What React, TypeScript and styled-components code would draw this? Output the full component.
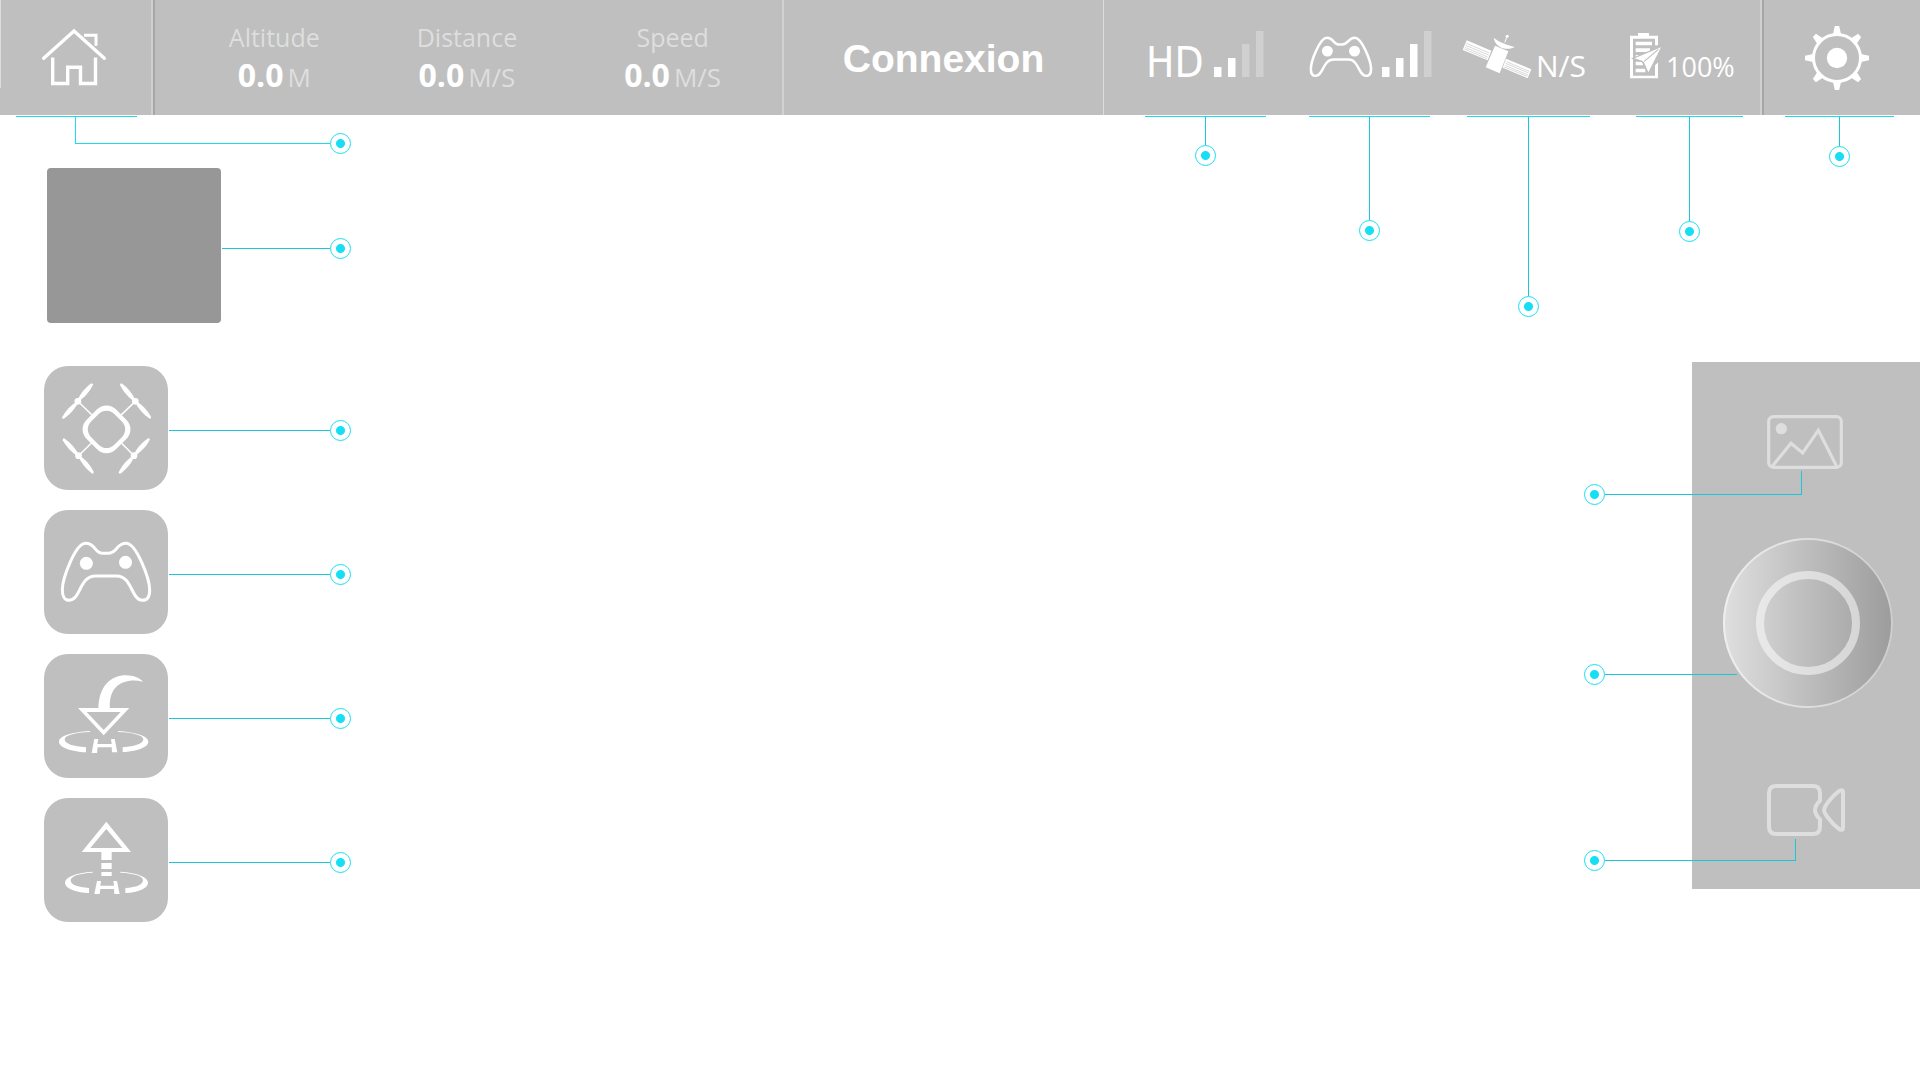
import React from "react";
import styled, { createGlobalStyle, css } from "styled-components";

const color = {
  panel: "#bfbfbf",
  preview: "#979797",
  soft: "#dedede",
  line: "#1cc6da",
  rule: "#1cdcec",
  marker: "#17dff3",
};

const GlobalStyle = createGlobalStyle`
  *, *::before, *::after { box-sizing: border-box; }
  body {
    margin: 0;
    background: #ffffff;
    font-family: "Open Sans", "Noto Sans", sans-serif;
  }
  button {
    margin: 0;
    padding: 0;
    border: 0;
    background: none;
    color: inherit;
    font: inherit;
    cursor: pointer;
  }
  svg { display: block; flex: none; overflow: visible; }
`;

const Page = styled.div`
  min-height: 100vh;
`;

/* ---------- top bar ---------- */

const TopBar = styled.header`
  position: relative;
  display: grid;
  grid-template-columns: 155px 629fr 320fr 660fr 156px;
  height: 115px;
  background: ${color.panel};
  color: #ffffff;
`;

const grooved = css`
  border-right: 2px solid #a6a6a6;
  box-shadow: inset -2px 0 #d0d0d0;
`;

const HomeCell = styled.div`
  display: flex;
  padding-left: 16px;
  background: linear-gradient(#dcdcdc, #dcdcdc) 0 0 / 1px 88px no-repeat;
  ${grooved}
`;

const Telemetry = styled.section`
  display: grid;
  grid-template-columns: 192fr 192fr 218fr;
  padding: 19px 0 0 23px;
  border-right: 2px solid #d2d2d2;
`;

const Metric = styled.div`
  display: flex;
  flex-direction: column;
  align-items: center;
  line-height: 37px;
  white-space: nowrap;
`;

const MetricLabel = styled.span`
  font-size: 25px;
  color: ${color.soft};
`;

const MetricReading = styled.span`
  display: flex;
  align-items: baseline;
  gap: 4px;
`;

const MetricValue = styled.strong`
  font-size: 32px;
  font-weight: 700;
`;

const MetricUnit = styled.span`
  font-size: 26px;
  color: ${color.soft};
`;

const ConnectButton = styled.button`
  padding-top: 3px;
  border-right: 1px solid #dcdcdc;
  font-family: "Liberation Sans", Arial, sans-serif;
  font-size: 39px;
  font-weight: 700;
`;

const StatusArea = styled.section`
  display: grid;
  grid-template-columns: 164fr 154fr 167fr 132fr;
  padding-left: 41px;
  ${grooved}
`;

const StatusItem = styled.div<{ $width: number; $gap: number }>`
  position: relative;
  display: flex;
  align-items: baseline;
  gap: ${(p) => p.$gap}px;
  width: ${(p) => p.$width}px;
  line-height: 40px;
  white-space: nowrap;

  svg { margin-top: 31px; }
`;

const HdLabel = styled.span`
  width: 59px;
  padding-left: 1px;
  font-family: "DejaVu Sans Condensed", "DejaVu Sans", sans-serif;
  font-size: 42px;
`;

const StatusText = styled.span<{ $size: number }>`
  font-size: ${(p) => p.$size}px;
`;

const BarButton = styled.button<{ $width: number }>`
  position: relative;
  display: flex;
  align-items: center;
  justify-content: center;
  width: ${(p) => p.$width}px;
`;

const SettingsCell = styled.div`
  display: flex;
  padding-left: 21px;
`;

/* ---------- callouts ---------- */

const Ring = styled.i`
  display: block;
  flex: none;
  width: 21px;
  height: 21px;
  border: 1px solid ${color.marker};
  border-radius: 50%;
  background: radial-gradient(circle, ${color.marker} 4px, transparent 5px);
`;

const Drop = styled.span<{ $inset: number }>`
  position: absolute;
  top: calc(100% + 1px);
  left: ${(p) => p.$inset}px;
  right: 0;
  display: flex;
  flex-direction: column;
  align-items: center;
  border-top: 1px solid ${color.rule};
`;

const Stem = styled.i<{ $length: number }>`
  width: 1px;
  height: ${(p) => p.$length}px;
  background: ${color.line};
`;

const HomeElbow = styled.span`
  position: absolute;
  top: 0;
  left: 59px;
  width: 255px;
  height: 27px;
  border-left: 1px solid ${color.rule};
  border-bottom: 1px solid ${color.rule};

  ${Ring} {
    position: absolute;
    left: 100%;
    bottom: -11px;
  }
`;

const Reach = styled.span<{ $top: number; $right: number; $width: number; $height: number }>`
  position: absolute;
  top: ${(p) => p.$top}px;
  right: ${(p) => p.$right}px;
  width: ${(p) => p.$width}px;
  height: ${(p) => p.$height}px;
  border-right: 1px solid ${color.line};
  border-bottom: 1px solid ${color.line};

  ${Ring} {
    position: absolute;
    right: 100%;
    bottom: -11px;
  }
`;

const Leader = styled.span`
  flex: 1;
  display: flex;
  align-items: center;
  margin-left: 1px;
  padding-top: 5px;

  &::before {
    content: "";
    flex: 1;
    height: 1px;
    background: ${color.line};
  }
`;

/* ---------- body ---------- */

const Stage = styled.main`
  display: flex;
  justify-content: space-between;
  align-items: flex-start;
`;

const ToolRail = styled.nav`
  display: flex;
  flex-direction: column;
  gap: 20px;
  width: 351px;
  padding: 53px 0 0 44px;
`;

const ToolRow = styled.div`
  display: flex;
  align-items: center;
`;

const PreviewRow = styled(ToolRow)`
  margin: 0 0 23px 3px;
`;

const Preview = styled.div`
  width: 174px;
  height: 155px;
  border-radius: 4px;
  background: ${color.preview};
`;

const ToolButton = styled.button`
  width: 124px;
  height: 124px;
  border-radius: 24px;
  background: ${color.panel};
`;

const CameraPanel = styled.aside`
  display: flex;
  flex-direction: column;
  align-items: center;
  gap: 66px;
  width: 228px;
  margin-top: 247px;
  padding: 46px 0 51px 4px;
  background: ${color.panel};
`;

const CameraButton = styled.button`
  position: relative;
`;

const Shutter = styled.button`
  position: relative;
  display: grid;
  place-items: center;
  width: 170px;
  height: 170px;
  border-radius: 50%;
  background: linear-gradient(90deg, #dfdfdf, #bdbdbd 50%, #9c9c9c);

  &::before {
    content: "";
    position: absolute;
    inset: 0;
    border: 2px solid rgba(255, 255, 255, 0.5);
    border-radius: 50%;
  }

  &::after {
    content: "";
    width: 104px;
    height: 104px;
    border: 8px solid rgba(255, 255, 255, 0.52);
    border-radius: 50%;
  }
`;

/* ---------- drawings ---------- */

const HomeIcon = () => (
  <svg width="69" height="59" viewBox="42 28 69 59" fill="none" stroke="#fff" strokeWidth="3.4">
    <path d="M43.7 58.3 74 31l30.3 27.3" strokeLinecap="round" />
    <path d="M52.7 57.5v26h15V67.2h12.8v16.3h15v-26" />
    <path d="M84 35.2h12v10.5" strokeWidth="3" />
  </svg>
);

const SignalBars = ({ level }: { level: number }) => (
  <svg width="50" height="46" viewBox="0 0 50 46">
    {[10, 19, 33, 46].map((h, i) => (
      <rect key={h} x={i * 14} y={46 - h} width="7.5" height={h} fill={i < level ? "#fff" : "#d0d0d0"} />
    ))}
  </svg>
);

const PAD_OUTLINE =
  "M167 580C136 580 97 686 97 720C97 740 105 751 117 751C152 751 148 678 196 678H260C307 678 303 751 338 751C351 751 359 740 359 720C359 686 319 580 288 580C258 580 262 610 234 610H218C192 610 198 580 167 580Z";

const PadIcon = () => (
  <svg width="124" height="124" viewBox="42 480 372 372">
    <path d={PAD_OUTLINE} fill="none" stroke="#fff" strokeWidth="9" />
    <circle cx="169" cy="640" r="19.5" fill="#fff" />
    <circle cx="286.5" cy="637" r="19.5" fill="#fff" />
  </svg>
);

const SmallPadIcon = () => (
  <svg width="63" height="46" viewBox="89 550 274 206" preserveAspectRatio="none">
    <path d={PAD_OUTLINE} fill="none" stroke="#fff" strokeWidth="11" />
    <circle cx="169" cy="640" r="24" fill="#fff" />
    <circle cx="287" cy="640" r="24" fill="#fff" />
  </svg>
);

const SatelliteIcon = () => (
  <svg width="68" height="46" viewBox="69 93 204 138" fill="#fff">
    <path d="M80 121 154 152 143 181 68 150ZM165 137 205 154 179 220 137 202ZM198 176 274 208 263 235 188 203Z" />
    <path d="M161 113C176 126 200 134 224 141C206 153 166 146 161 113Z" />
    <path d="M194 127 201 110" stroke="#fff" strokeWidth="3" />
    <circle cx="201.500" cy="108.500" r="4.500" />
    <path
      d="M79 130 148 159M77 136 146 165M75 142 143 171M73 147 141 176M199 185 268 214M197 190 266 219M195 196 264 225M193 201 262 229"
      stroke={color.panel}
      strokeWidth="1.800"
    />
  </svg>
);

const BatteryIcon = () => (
  <svg width="31" height="46" viewBox="570 93 93 138" fill="#fff">
    <path d="M594 99H627V107H654V235H570V107H594ZM579 116V227H645V116Z" fillRule="evenodd" />
    <path d="M587 125H636V136H587ZM587 145H630V156H587ZM587 165H606V175H587ZM587 185H610V196H587ZM587 206H616V217H587Z" />
    <path d="M641 136H660V182L645 196Z" fill={color.panel} />
    <path d="M663 142 584 175 609 184 625 217Z" stroke={color.panel} strokeWidth="8" />
    <path d="M663 142 584 175 608 183 613 189 625 217Z" />
    <path d="M655 148 612 185" stroke={color.panel} strokeWidth="3.500" />
  </svg>
);

const GearIcon = () => (
  <svg width="69" height="64" viewBox="1095 78 207 192">
    <circle cx="1191" cy="174" r="70.500" fill="none" stroke="#fff" strokeWidth="9" />
    <circle cx="1191" cy="174" r="30.500" fill="#fff" />
    {[0, 45, 90, 135, 180, 225, 270, 315].map((a) => (
      <path key={a} d="M1179 102 1184.500 78H1197.500L1203 102Z" fill="#fff" transform={`rotate(${a} 1191 174)`} />
    ))}
  </svg>
);

const rotors = [
  { x: 143.5, y: 154, arm: [190, 199], blades: [-50, 132] },
  { x: 316, y: 154, arm: [269, 199], blades: [-130, 48] },
  { x: 145.5, y: 317, arm: [190, 274], blades: [-132, 50] },
  { x: 312, y: 317, arm: [269, 274], blades: [-48, 130] },
];

const DroneIcon = () => (
  <svg width="124" height="124" viewBox="42 48 372 372" fill="#fff">
    {rotors.map((r) => (
      <g key={`${r.x}-${r.y}`}>
        <path d={`M${r.x} ${r.y}L${r.arm[0]} ${r.arm[1]}`} stroke="#fff" strokeWidth="4.500" />
        <circle cx={r.x} cy={r.y} r="10" />
        {r.blades.map((a) => (
          <path
            key={a}
            d="M0-2C20-9 44-9 66-4Q71-1 68 3C46 9 22 8 0 2Z"
            transform={`translate(${r.x} ${r.y}) rotate(${a})`}
          />
        ))}
      </g>
    ))}
    <g transform="translate(229.500 238) rotate(45)">
      <rect x="-62.500" y="-62.500" width="125" height="125" rx="40" />
      <rect x="-49" y="-49" width="98" height="98" rx="32" fill={color.panel} />
    </g>
  </svg>
);

const ReturnIcon = () => (
  <svg width="124" height="124" viewBox="42 48 372 372" fill="#fff">
    <path d="M205 212C207 142 244 112 288 112C312 112 330 121 339 131C286 118 234 140 240 212Z" />
    <path d="M144 210H298L221 292ZM170 222 221 276 272 222Z" fillRule="evenodd" />
    <path d="M193 303H205L202 318H245L243 303H254L262 343H246L245 328H203L201 345H185Z" />
    <path d="M180 279C120 283 87 295 87 311C87 327 120 340 168 343V328C130 325 104 318 104 304C104 292 135 284 180 282Z" />
    <path d="M264 279C320 283 355 295 355 311C355 328 320 340 278 342V328C315 325 340 317 340 304C340 292 310 284 264 282Z" />
  </svg>
);

const TakeOffIcon = () => (
  <svg width="124" height="124" viewBox="42 474 372 372" fill="#fff">
    <path d="M229 545 303 636H155ZM229 567 181 624H277Z" fillRule="evenodd" />
    <path d="M214 634H245V660H214ZM214 669H245V687H214ZM214 696H245V708H214Z" />
    <path d="M201 723H213L211 737H252L250 723H261L269 762H253L252 747H211L209 762H193Z" />
    <path d="M188 695C135 698 105 712 105 728C105 745 135 757 177 759V744C142 742 122 734 122 721C122 709 145 700 188 698Z" />
    <path d="M271 695C325 698 354 712 354 728C354 745 325 757 286 759V744C320 742 339 734 339 720C339 709 315 700 271 698Z" />
  </svg>
);

const PhotoIcon = () => (
  <svg width="84" height="64" viewBox="588 174 252 192" fill="none" stroke={color.soft} strokeWidth="9.500">
    <rect x="596" y="200" width="218" height="152" rx="14" />
    <path d="M605 351 663 280 698 309 745 241 801 351" />
    <circle cx="634" cy="236" r="17" fill={color.soft} stroke="none" />
  </svg>
);

const VideoIcon = () => (
  <svg width="84" height="64" viewBox="588 522 252 192" fill="none" stroke={color.soft} strokeWidth="12">
    <path d="M750 602V580Q750 558 728 558H619Q597 558 597 580V680Q597 702 619 702H728Q750 702 750 680V658C741 649 735 641 735 630C735 619 741 611 750 602Z" />
    <path d="M819 577V683C819 692 811 690 806 686C784 670 762 640 762 630C762 620 784 590 806 574C811 570 819 568 819 577Z" />
  </svg>
);

/* ---------- assembly ---------- */

const metrics = [
  { label: "Altitude", value: "0.0", unit: "M" },
  { label: "Distance", value: "0.0", unit: "M/S" },
  { label: "Speed", value: "0.0", unit: "M/S" },
];

const tools = [
  { name: "Drone", Icon: DroneIcon },
  { name: "Controller", Icon: PadIcon },
  { name: "Return and land", Icon: ReturnIcon },
  { name: "Take off", Icon: TakeOffIcon },
];

const DropCallout = ({ length, inset = 0 }: { length: number; inset?: number }) => (
  <Drop $inset={inset}>
    <Stem $length={length} />
    <Ring />
  </Drop>
);

export default function App() {
  return (
    <Page>
      <GlobalStyle />
      <TopBar>
        <HomeCell>
          <BarButton $width={121} aria-label="Home">
            <HomeIcon />
            <Drop $inset={0}>
              <HomeElbow>
                <Ring />
              </HomeElbow>
            </Drop>
          </BarButton>
        </HomeCell>

        <Telemetry>
          {metrics.map((m) => (
            <Metric key={m.label}>
              <MetricLabel>{m.label}</MetricLabel>
              <MetricReading>
                <MetricValue>{m.value}</MetricValue>
                <MetricUnit>{m.unit}</MetricUnit>
              </MetricReading>
            </Metric>
          ))}
        </Telemetry>

        <ConnectButton>Connexion</ConnectButton>

        <StatusArea>
          <StatusItem $width={121} $gap={10}>
            <HdLabel>HD</HdLabel>
            <SignalBars level={2} />
            <DropCallout length={28} />
          </StatusItem>
          <StatusItem $width={121} $gap={10}>
            <SmallPadIcon />
            <SignalBars level={3} />
            <DropCallout length={103} />
          </StatusItem>
          <StatusItem $width={127} $gap={5}>
            <SatelliteIcon />
            <StatusText $size={30}>N/S</StatusText>
            <DropCallout length={179} inset={4} />
          </StatusItem>
          <StatusItem $width={113} $gap={5}>
            <BatteryIcon />
            <StatusText $size={27}>100%</StatusText>
            <DropCallout length={104} inset={6} />
          </StatusItem>
        </StatusArea>

        <SettingsCell>
          <BarButton $width={109} aria-label="Settings">
            <GearIcon />
            <DropCallout length={29} />
          </BarButton>
        </SettingsCell>
      </TopBar>

      <Stage>
        <ToolRail>
          <PreviewRow>
            <Preview />
            <Leader>
              <Ring />
            </Leader>
          </PreviewRow>
          {tools.map(({ name, Icon }) => (
            <ToolRow key={name}>
              <ToolButton aria-label={name}>
                <Icon />
              </ToolButton>
              <Leader>
                <Ring />
              </Leader>
            </ToolRow>
          ))}
        </ToolRail>

        <CameraPanel>
          <CameraButton aria-label="Photo">
            <PhotoIcon />
            <Reach $top={63} $right={48} $width={197} $height={24}>
              <Ring />
            </Reach>
          </CameraButton>
          <Shutter aria-label="Shutter">
            <Reach $top={136} $right={156} $width={132} $height={1}>
              <Ring />
            </Reach>
          </Shutter>
          <CameraButton aria-label="Video">
            <VideoIcon />
            <Reach $top={65} $right={54} $width={191} $height={22}>
              <Ring />
            </Reach>
          </CameraButton>
        </CameraPanel>
      </Stage>
    </Page>
  );
}
